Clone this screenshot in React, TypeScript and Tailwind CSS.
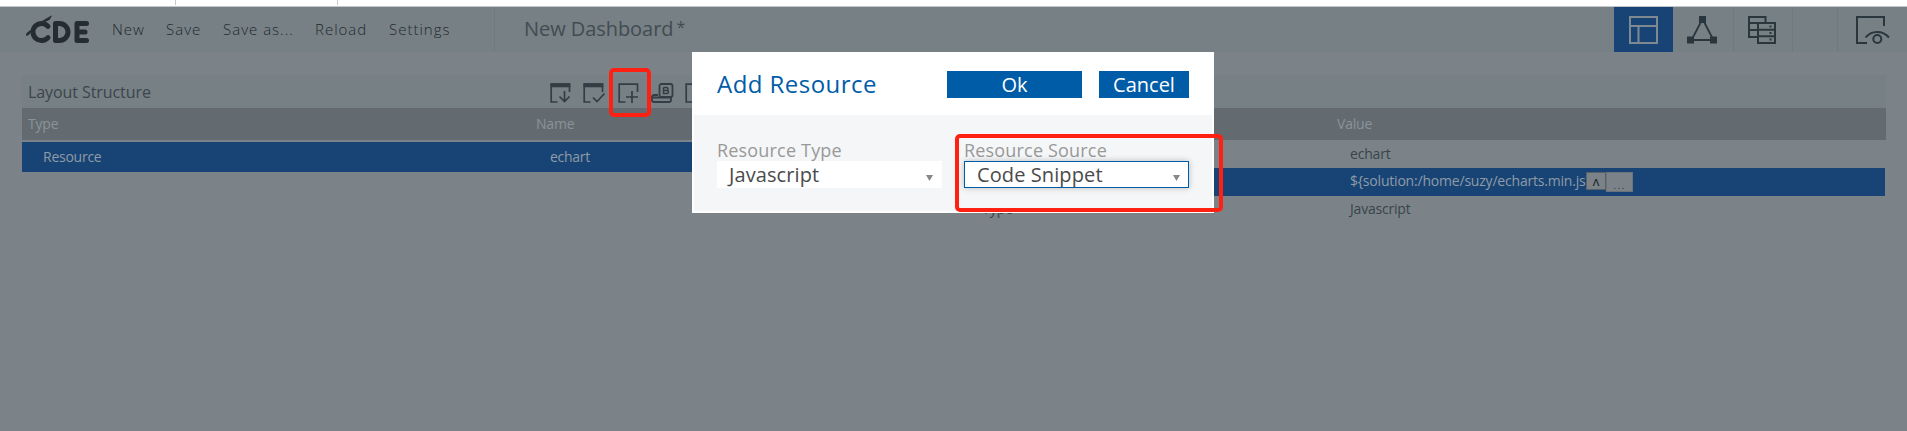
import React from "react";

type P = { children?: React.ReactNode; className?: string };

const T = ({ children, className = "" }: P) => (
  <span className={"whitespace-pre leading-none " + className}>{children}</span>
);

function Logo() {
  return (
    <svg width="66" height="30" viewBox="0 0 66 30" fill="none" stroke="#252d33" strokeWidth="5" strokeLinecap="round" strokeLinejoin="round">
      <path d="M22 11.300A8.600 8.600 0 1 0 22 22.700" />
      <path d="M29.500 8.500H33.500a8.500 8.500 0 0 1 0 17H29.500Z" />
      <path d="M60.500 8.500H51V25.500H60.500M51 17H59" />
      <path d="M17 5.800L25.500 .8L23.500 4.500L19 6.800Z" fill="#252d33" strokeWidth=".6" />
      <path d="M0 20C1 17.500 3 16 5 15.500C4.500 18 3 20.500 0 20.500Z" fill="#252d33" strokeWidth=".6" />
    </svg>
  );
}

function Frame({ children, bar, className = "" }: P & { bar?: boolean }) {
  return (
    <svg width="23" height="21" viewBox="0 0 23 21" fill="none" stroke="#323d45" strokeWidth="1.700" className={className}>
      <path d="M7.500 19H1.200V1.200H19.500V9" />
      {bar && <path d="M.5 2.300H20.300" strokeWidth="4" />}
      {children}
    </svg>
  );
}

function Select({ label, value, active }: { label: string; value: string; active?: boolean }) {
  return (
    <div className="flex w-[225px] flex-col">
      <div className="flex h-[18px] items-start">
        <T className="-mt-[2px] text-[18px] tracking-[0.18px] text-[#999]">{label}</T>
      </div>
      <div className={active ? "flex h-[27px] items-center justify-between border border-[#005ca7] bg-white pr-[8px] pl-[12px] shadow-[0_0_6px_rgba(0,0,0,0.25)]" : "flex h-[27px] items-center justify-between bg-white pr-[9px] pl-[12px]"}>
        <T className="text-[20px] tracking-[0.1px] text-[#4a4a4a]">{value}</T>
        <svg width="7" height="6" viewBox="0 0 7 6" className="mt-[6px]"><path d="M0 0H7L3.500 6Z" fill="#888" /></svg>
      </div>
    </div>
  );
}

export default function App() {
  return (
    <div className="relative h-[431px] w-[1907px] overflow-hidden bg-[#7b8388] font-['Open_Sans','Noto_Sans',sans-serif]">
      <div className="flex h-[7px] border-b border-[#c4c6c7] bg-white">
        <div className="h-[5px] w-[176px] border-r border-[#c8c8c8]" />
        <div className="h-[5px] w-[162px] border-r border-[#c8c8c8]" />
      </div>

      <header className="flex h-[45px] bg-[#778085]">
        <div className="flex w-[495px] items-center border-r border-[#70797e] pl-[26px]">
          <Logo />
          <nav className="flex pl-[20px] text-[15px] font-light text-[#22292e]">
            <T className="w-[54px] tracking-[1px]">New</T>
            <T className="w-[57px] tracking-[1px]">Save</T>
            <T className="w-[92px] tracking-[1px]">Save as...</T>
            <T className="w-[74px] tracking-[1px]">Reload</T>
            <T className="tracking-[1px]">Settings</T>
          </nav>
        </div>
        <div className="flex flex-1 pt-[12px] pl-[29px] text-[#424c52]">
          <T className="text-[20px] tracking-[-0.06px]">New Dashboard</T>
          <T className="pl-[3px] text-[16px]">*</T>
        </div>
        <div className="flex w-[59px] items-center justify-center bg-[#184475]">
          <svg width="29" height="29" viewBox="0 0 29 29" fill="none" stroke="#7f8991" strokeWidth="2"><path d="M1 2H28V28H1ZM1 11H28M9.500 11V28" /></svg>
        </div>
        <div className="flex w-[61px] items-center border-r border-[#70797e] pl-[14px]">
          <svg width="31" height="29" viewBox="0 0 31 29" fill="none" stroke="#2a363e" strokeWidth="1.800"><path d="M15.500 4L4.500 25H26.500Z" /><path d="M12 1H19V8H12ZM0 21.500H7V28.500H0ZM23 21.500H30V28.500H23Z" fill="#2a363e" stroke="none" /></svg>
        </div>
        <div className="flex w-[59px] items-center border-r border-[#70797e] pl-[14px]">
          <svg width="29" height="29" viewBox="0 0 29 29" fill="none" stroke="#2a363e" strokeWidth="2"><path d="M10 22H1V2H17.500V8M1 8H17M1 15H10M10 8H27V28H10ZM10 14.700H27M10 21.300H27" /><path d="M21.500 10.500h2v2h-2ZM21.500 17h2v2h-2ZM21.500 23.500h2v2h-2Z" fill="#2a363e" stroke="none" /></svg>
        </div>
        <div className="w-[45px] border-r border-[#70797e]" />
        <div className="flex w-[69px] items-center pl-[17px]">
          <svg width="36" height="29" viewBox="0 0 36 29" fill="none" stroke="#2a363e" strokeWidth="2"><path d="M12 28H2V2H29V11M10.500 22.500C16.500 15 27.500 15 34 22.500" /><circle cx="22.300" cy="24" r="4" /></svg>
        </div>
      </header>

      <main className="mx-[22px] mt-[23px] flex flex-col">
        <div className="flex h-[33px] w-[1864px] items-center bg-[#778085] pl-[6px]">
          <T className="w-[522px] text-[16px] tracking-[-0.08px] text-[#3b454b]">Layout Structure</T>
          <div className="flex pt-[3px]">
            <Frame bar className="mr-[10px]"><path d="M14.500 8V18M9.500 13.500L14.500 18.500L19.500 13.500" /></Frame>
            <Frame bar className="mr-[12px]"><path d="M10 14.500L14 18.500L21.500 10.500" /></Frame>
            <Frame className="mr-[10px]"><path d="M14 8V20M8 14H20" /></Frame>
            <svg width="23" height="21" viewBox="0 0 23 21" fill="none" stroke="#323d45" strokeWidth="1.800" className="mr-[11px]">
              <rect x="8.500" y="1" width="13" height="13" rx="2" />
              <path d="M12.500 4.500V10.500H16a1.500 1.500 0 0 0 0-3H12.500M12.500 4.500H15.500a1.500 1.500 0 0 1 0 3" strokeWidth="1.500" />
              <path d="M7 12H3a2 2 0 0 0-2 2V17a2 2 0 0 0 2 2H18a2 2 0 0 0 2-2V14M2 14.500H19" />
            </svg>
            <Frame />
          </div>
        </div>
        <div className="flex h-[32px] w-[1864px] items-center bg-[#636b71] pl-[6px] text-[14px] text-[#8b9398]">
          <T className="w-[508px] tracking-[-0.2px]">Type</T>
          <T className="w-[801px] tracking-[-0.2px]">Name</T>
          <T className="tracking-[-0.2px]">Value</T>
        </div>
        <div className="flex h-[98px]">
          <div className="mt-[2px] flex h-[30px] w-[932px] items-center bg-[#184475] pb-px pl-[21px] text-[14px] text-[#8f9ba6]">
            <T className="w-[507px] tracking-[-0.25px]">Resource</T>
            <T className="tracking-[-0.3px]">echart</T>
          </div>
          <div className="flex w-[931px] flex-col text-[14px] text-[#394349]">
            <div className="flex h-[28px] items-center pl-[396px]"><T className="tracking-[-0.2px]">echart</T></div>
            <div className="flex h-[28px] items-start bg-[#184475] pl-[396px] text-[#8f9ba6]">
              <T className="mt-[6px] w-[236px] tracking-[-0.2px]">{"${solution:/home/suzy/echarts.min.js}"}</T>
              <div className="relative mt-[4px] flex items-start text-[#1f272c]">
                <div className="flex h-[18px] w-[20px] items-center justify-center border border-[#596168] bg-[#7b8388] text-[13px] leading-none">ʌ</div>
                <div className="flex h-[20px] w-[27px] items-end justify-center border border-[#6a747c] bg-[#7b8388] text-[13px] leading-none font-light tracking-[1px]">...</div>
              </div>
            </div>
            <div className="flex h-[28px] items-center pb-[2px] pl-[28px]"><T className="w-[368px]">Type</T><T className="tracking-[-0.2px]">Javascript</T></div>
          </div>
        </div>
      </main>

      <section role="dialog" className="absolute top-[52px] left-[692px] flex h-[161px] w-[522px] flex-col bg-white px-[2px] pb-[2px]">
        <div className="flex h-[63px] items-start pt-[19px] pl-[23px]">
          <T className="mt-px w-[230px] text-[24px] tracking-[0.45px] text-[#005ca7]">Add Resource</T>
          <button className="mr-[17px] flex h-[27px] w-[135px] items-center justify-center bg-[#005ca7] pt-px text-white"><T className="text-[20px]">Ok</T></button>
          <button className="flex h-[27px] w-[90px] items-center justify-center bg-[#005ca7] pt-px text-white"><T className="text-[20px]">Cancel</T></button>
        </div>
        <div className="flex flex-1 gap-[22px] bg-[#f4f6f8] pt-[28px] pl-[23px]">
          <Select label="Resource Type" value="Javascript" />
          <Select label="Resource Source" value="Code Snippet" active />
        </div>
      </section>
      <div className="absolute top-[68px] left-[609px] h-[49px] w-[42px] rounded-[5px] border-4 border-[#ff2012]" />
      <div className="absolute top-[134px] left-[955px] h-[78px] w-[268px] rounded-[5px] border-4 border-[#ff2012]" />
    </div>
  );
}
